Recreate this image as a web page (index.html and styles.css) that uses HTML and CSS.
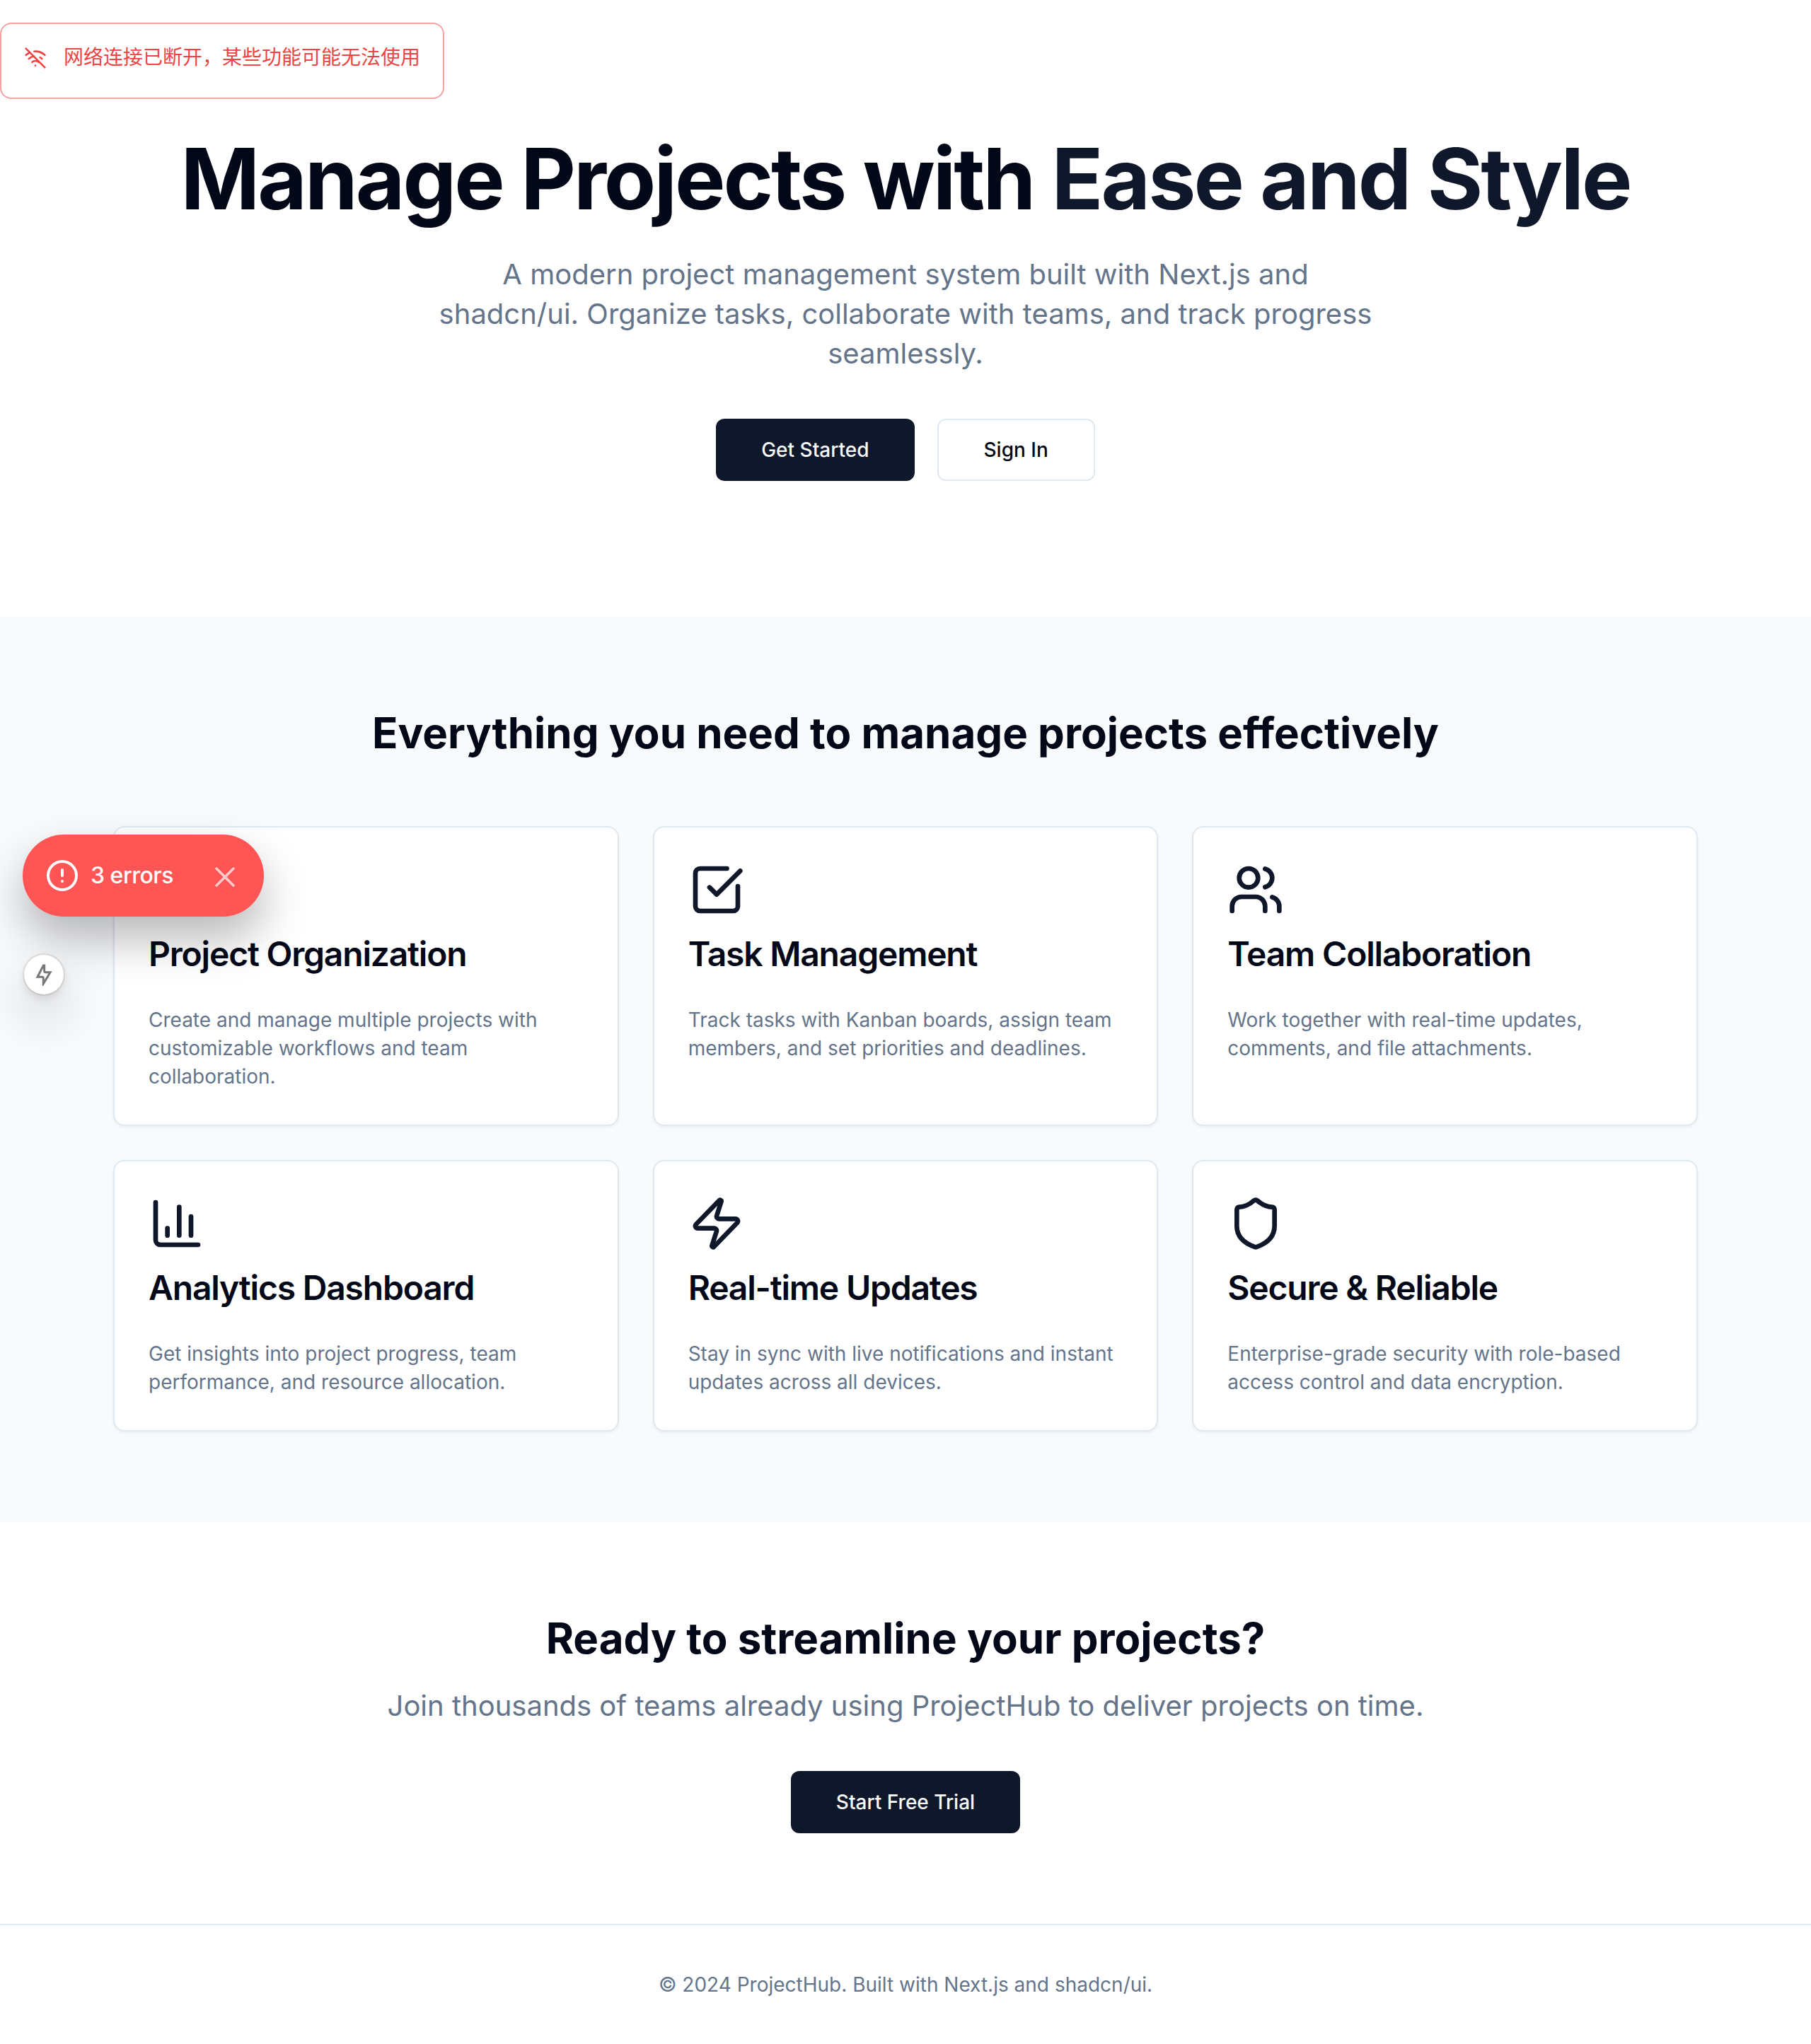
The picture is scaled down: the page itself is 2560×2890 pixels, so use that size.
FILE: index.html
```html
<!DOCTYPE html>
<html lang="en">
<head>
<meta charset="utf-8">
<title>ProjectHub</title>
<link rel="stylesheet" href="styles.css">
</head>
<body>
<div class="alert" role="alert">
  <svg class="alert-icon" viewBox="0 0 24 24"><path d="M12 20h.01"/><path d="M8.5 16.429a5 5 0 0 1 7 0"/><path d="M5 12.859a10 10 0 0 1 5.17-2.69"/><path d="M19 12.859a10 10 0 0 0-2.007-1.523"/><path d="M2 8.82a15 15 0 0 1 4.177-2.643"/><path d="M22 8.82a15 15 0 0 0-11.288-3.764"/><path d="m2 2 20 20"/></svg>
  <div class="alert-text">网络连接已断开，某些功能可能无法使用</div>
</div>

<section class="hero">
  <h1>Manage Projects with <span class="accent">Ease and Style</span></h1>
  <p class="lead">A modern project management system built with Next.js and shadcn/ui. Organize tasks, collaborate with teams, and track progress seamlessly.</p>
  <div class="actions">
    <a class="btn btn-primary">Get Started</a>
    <a class="btn btn-outline">Sign In</a>
  </div>
</section>

<section class="features">
  <h2>Everything you need to manage projects effectively</h2>
  <div class="grid">
    <article class="card">
      <svg class="icon" viewBox="0 0 24 24"><path d="M4 20h16a2 2 0 0 0 2-2V8a2 2 0 0 0-2-2h-7.930a2 2 0 0 1-1.660-.9l-.820-1.200A2 2 0 0 0 7.930 3H4a2 2 0 0 0-2 2v13c0 1.100.9 2 2 2Z"/></svg>
      <h3>Project Organization</h3>
      <p>Create and manage multiple projects with customizable workflows and team collaboration.</p>
    </article>
    <article class="card">
      <svg class="icon" viewBox="0 0 24 24"><path d="M21 10.5V19a2 2 0 0 1-2 2H5a2 2 0 0 1-2-2V5a2 2 0 0 1 2-2h11.344"/><path d="m9 11 3 3L22 4"/></svg>
      <h3>Task Management</h3>
      <p>Track tasks with Kanban boards, assign team members, and set priorities and deadlines.</p>
    </article>
    <article class="card">
      <svg class="icon" viewBox="0 0 24 24"><path d="M16 21v-2a4 4 0 0 0-4-4H6a4 4 0 0 0-4 4v2"/><path d="M16 3.128a4 4 0 0 1 0 7.744"/><path d="M22 21v-2a4 4 0 0 0-3-3.870"/><circle cx="9" cy="7" r="4"/></svg>
      <h3>Team Collaboration</h3>
      <p>Work together with real-time updates, comments, and file attachments.</p>
    </article>
    <article class="card">
      <svg class="icon" viewBox="0 0 24 24"><path d="M3 3v16a2 2 0 0 0 2 2h16"/><path d="M18 17V9"/><path d="M13 17V5"/><path d="M8 17v-3"/></svg>
      <h3>Analytics Dashboard</h3>
      <p>Get insights into project progress, team performance, and resource allocation.</p>
    </article>
    <article class="card">
      <svg class="icon" viewBox="0 0 24 24"><path d="M4 14a1 1 0 0 1-.78-1.63l9.900-10.200a.5.5 0 0 1 .86.46l-1.920 6.020A1 1 0 0 0 13 10h7a1 1 0 0 1 .78 1.630l-9.900 10.200a.5.5 0 0 1-.86-.46l1.920-6.020A1 1 0 0 0 11 14z"/></svg>
      <h3>Real-time Updates</h3>
      <p>Stay in sync with live notifications and instant updates across all devices.</p>
    </article>
    <article class="card">
      <svg class="icon" viewBox="0 0 24 24"><path d="M20 13c0 5-3.500 7.500-7.660 8.950a1 1 0 0 1-.67-.01C7.500 20.500 4 18 4 13V6a1 1 0 0 1 1-1c2 0 4.500-1.200 6.240-2.720a1.170 1.170 0 0 1 1.520 0C14.510 3.810 17 5 19 5a1 1 0 0 1 1 1z"/></svg>
      <h3>Secure &amp; Reliable</h3>
      <p>Enterprise-grade security with role-based access control and data encryption.</p>
    </article>
  </div>
</section>

<section class="cta">
  <h2>Ready to streamline your projects?</h2>
  <p>Join thousands of teams already using ProjectHub to deliver projects on time.</p>
  <a class="btn btn-primary">Start Free Trial</a>
</section>

<footer class="footer">© 2024 ProjectHub. Built with Next.js and shadcn/ui.</footer>

<div class="errors">
  <svg class="errors-icon" viewBox="0 0 48 48"><circle cx="24" cy="24" r="20"/><path d="M24 16v8M24 32h.01"/></svg>
  <span class="errors-label">3 errors</span>
  <svg class="errors-close" viewBox="0 0 28 28"><path d="M26 2 2 26M2 2l24 24"/></svg>
</div>
<div class="static-badge">
  <svg class="bolt" viewBox="0 0 32 32"><path d="M15.400 3 7 19.300h6.300q2 0 2 2V29L25 12.700h-6.300q-2 0-2-2V3z"/></svg>
</div>
</body>
</html>
```
FILE: styles.css
```css
* { box-sizing: border-box; margin: 0; padding: 0; }

body {
  position: relative;
  background: #fff;
  color: #020817;
  font-family: Inter, "Noto Sans CJK SC", sans-serif;
  font-size: 32px;
  line-height: 48px;
}

svg {
  display: block;
  fill: none;
  stroke: currentColor;
  stroke-width: 2;
  stroke-linecap: round;
  stroke-linejoin: round;
}

.alert {
  position: absolute;
  top: 32px;
  left: 0;
  display: flex;
  gap: 24px;
  height: 108px;
  padding: 32px;
  border: 2px solid #f7a1a1;
  border-radius: 16px;
  background: #fff;
  color: #ef4444;
}
.alert-icon { width: 32px; height: 32px; }
.alert-text { margin-top: -5px; font-size: 28px; line-height: 40px; white-space: nowrap; }

.hero {
  display: flex;
  flex-direction: column;
  align-items: center;
  padding: 193px 64px 192px;
  text-align: center;
}
h1 { font-size: 120px; line-height: 120px; font-weight: 700; letter-spacing: -0.025em; }
.accent { color: #0f172a; }
.lead {
  max-width: 1344px;
  margin-top: 47px;
  color: #64748b;
  font-size: 40px;
  line-height: 56px;
}
.actions { display: flex; gap: 32px; margin-top: 64px; }

.btn {
  display: inline-flex;
  align-items: center;
  justify-content: center;
  height: 88px;
  padding: 0 64px;
  border-radius: 12px;
  font-size: 28px;
  line-height: 40px;
  font-weight: 500;
}
.btn-primary { background: #0f172a; color: #f8fafc; }
.btn-outline { border: 2px solid #e2e8f0; background: #fff; }

.features { padding: 128px 160px; background: #f9fafc; }
h2 { font-size: 60px; line-height: 72px; font-weight: 700; text-align: center; }
.grid {
  display: grid;
  grid-template-columns: repeat(3, 1fr);
  gap: 48px;
  margin-top: 96px;
}
.card {
  padding: 48px;
  border: 2px solid #e2e8f0;
  border-radius: 16px;
  background: #fff;
  box-shadow: 0 2px 4px rgba(0, 0, 0, 0.05);
}
.icon { width: 80px; height: 80px; color: #0f172a; }
h3 {
  margin-top: 27px;
  font-size: 48px;
  line-height: 48px;
  font-weight: 600;
  letter-spacing: -0.025em;
}
.card p { margin-top: 49px; color: #64748b; font-size: 28px; line-height: 40px; }

.cta {
  display: flex;
  flex-direction: column;
  align-items: center;
  padding: 128px 64px;
}
.cta p { margin: 32px 0 64px; color: #64748b; font-size: 40px; line-height: 56px; }

.footer {
  padding: 64px;
  border-top: 2px solid #e2e8f0;
  color: #64748b;
  font-size: 28px;
  line-height: 40px;
  text-align: center;
}

.errors {
  position: absolute;
  top: 1180px;
  left: 32px;
  display: flex;
  align-items: center;
  width: 341px;
  height: 116px;
  padding: 0 41px 0 32px;
  border-radius: 58px;
  background: #ff5555;
  color: #fff;
  box-shadow: 0 32px 64px rgba(0, 0, 0, 0.28);
}
.errors-icon { width: 48px; height: 48px; margin-right: 16px; stroke-width: 4; }
.errors-label { font-size: 32px; font-weight: 500; letter-spacing: -0.5px; white-space: nowrap; }
.errors-close { width: 28px; height: 28px; margin: 4px 0 0 auto; opacity: 0.7; stroke-width: 3.5; }

.static-badge {
  position: absolute;
  top: 1350px;
  left: 34px;
  display: flex;
  align-items: center;
  justify-content: center;
  width: 56px;
  height: 56px;
  border-radius: 50%;
  background: #fff;
  color: #777;
  box-shadow: 0 0 0 2px rgba(0, 0, 0, 0.08), 0 6px 12px rgba(0, 0, 0, 0.1), 0 32px 64px rgba(0, 0, 0, 0.2);
}
.bolt { width: 32px; height: 32px; stroke-width: 3; stroke-linejoin: miter; stroke-miterlimit: 10; }
```
